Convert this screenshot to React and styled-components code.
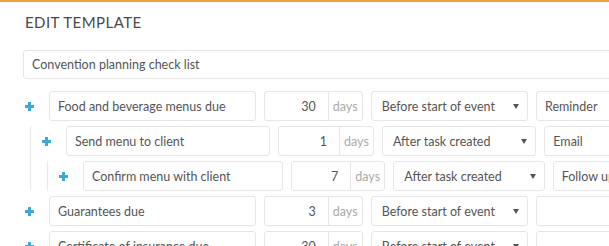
import React from "react";
import styled, { createGlobalStyle } from "styled-components";

const Global = createGlobalStyle`
  html, body {
    margin: 0;
    padding: 0;
    background: #fff;
    overflow: hidden;
  }
  body {
    font-family: Lato, "Open Sans", sans-serif;
    color: #555;
  }
`;

const TopBar = styled.div`
  height: 2px;
  background: #f0a040;
  width: 1000px;
`;

const Page = styled.div`
  width: 957px;
  padding: 0 0 0 23px;
`;

const Title = styled.h1`
  margin: 0;
  padding: 11px 0 0 2px;
  height: 36px;
  box-sizing: border-box;
  font-size: 15px;
  font-weight: 400;
  letter-spacing: 0.45px;
  color: #4a4a4a;
`;

const Field = styled.div`
  box-sizing: border-box;
  height: 30px;
  border: 1px solid #e6e6e6;
  border-radius: 3px;
  background: #fff;
  display: flex;
  align-items: center;
  padding: 0 8px;
  font-size: 12.5px;
  color: #555;
  white-space: nowrap;
  overflow: hidden;
  min-width: 0;
`;

const TemplateName = styled(Field)`
  margin: 12px 0 12px;
  height: 29px;
`;

const Rows = styled.div`
  display: flex;
  flex-direction: column;
  gap: 5px;
`;

const Children = styled.div`
  margin-left: 7px;
  border-left: 1px solid #e8e8e8;
  padding-left: 9px;
  display: flex;
  flex-direction: column;
  gap: 5px;
`;

const Row = styled.div`
  display: grid;
  grid-template-columns: 18px minmax(0, 207fr) minmax(0, 98fr) minmax(0, 157fr) minmax(0, 443fr);
  align-items: center;
  height: 30px;
  column-gap: 8px;
`;

const AddCell = styled.div`
  padding-left: 2px;
  display: flex;
  align-items: center;
`;

const Plus = styled.svg`
  width: 9px;
  height: 9px;
  display: block;
`;

const NumberGroup = styled.div`
  min-width: 0;
  display: flex;
  height: 30px;
  box-sizing: border-box;
  border: 1px solid #e6e6e6;
  border-radius: 3px;
  font-size: 12.5px;
`;

const NumberValue = styled.div`
  flex: 1;
  display: flex;
  align-items: center;
  justify-content: flex-end;
  padding-right: 12px;
  color: #555;
`;

const Unit = styled.div`
  width: 33px;
  border-left: 1px solid #e6e6e6;
  display: flex;
  align-items: center;
  justify-content: center;
  color: #aaa;
`;

const Select = styled(Field)`
  justify-content: space-between;
  padding: 0 8px 0 10px;
`;

const Caret = styled.span`
  width: 0;
  height: 0;
  border-left: 3px solid transparent;
  border-right: 3px solid transparent;
  border-top: 5px solid #555;
`;

const PlusIcon = () => (
  <Plus viewBox="0 0 9 9">
    <rect x="3" y="0" width="3" height="9" fill="#3ea8d4" />
    <rect x="0" y="3" width="9" height="3" fill="#3ea8d4" />
  </Plus>
);

const tasks = [
  {
    name: "Food and beverage menus due", days: 30, when: "Before start of event", type: "Reminder",
    children: [
      {
        name: "Send menu to client", days: 1, when: "After task created", type: "Email",
        children: [
          { name: "Confirm menu with client", days: 7, when: "After task created", type: "Follow up" },
        ],
      },
    ],
  },
  { name: "Guarantees due", days: 3, when: "Before start of event", type: "" },
  { name: "Certificate of insurance due", days: 30, when: "Before start of event", type: "" },
];

const Task = ({ task }) => (
  <>
    <Row>
      <AddCell><PlusIcon /></AddCell>
      <Field>{task.name}</Field>
      <NumberGroup>
        <NumberValue>{task.days}</NumberValue>
        <Unit>days</Unit>
      </NumberGroup>
      <Select>
        <span>{task.when}</span>
        <Caret />
      </Select>
      <Field>{task.type}</Field>
    </Row>
    {task.children && (
      <Children>
        {task.children.map(c => <Task key={c.name} task={c} />)}
      </Children>
    )}
  </>
);

export default function App() {
  return (
    <>
      <Global />
      <TopBar />
      <Page>
        <Title>EDIT TEMPLATE</Title>
        <TemplateName>Convention planning check list</TemplateName>
        <Rows>
          {tasks.map(t => <Task key={t.name} task={t} />)}
        </Rows>
      </Page>
    </>
  );
}
